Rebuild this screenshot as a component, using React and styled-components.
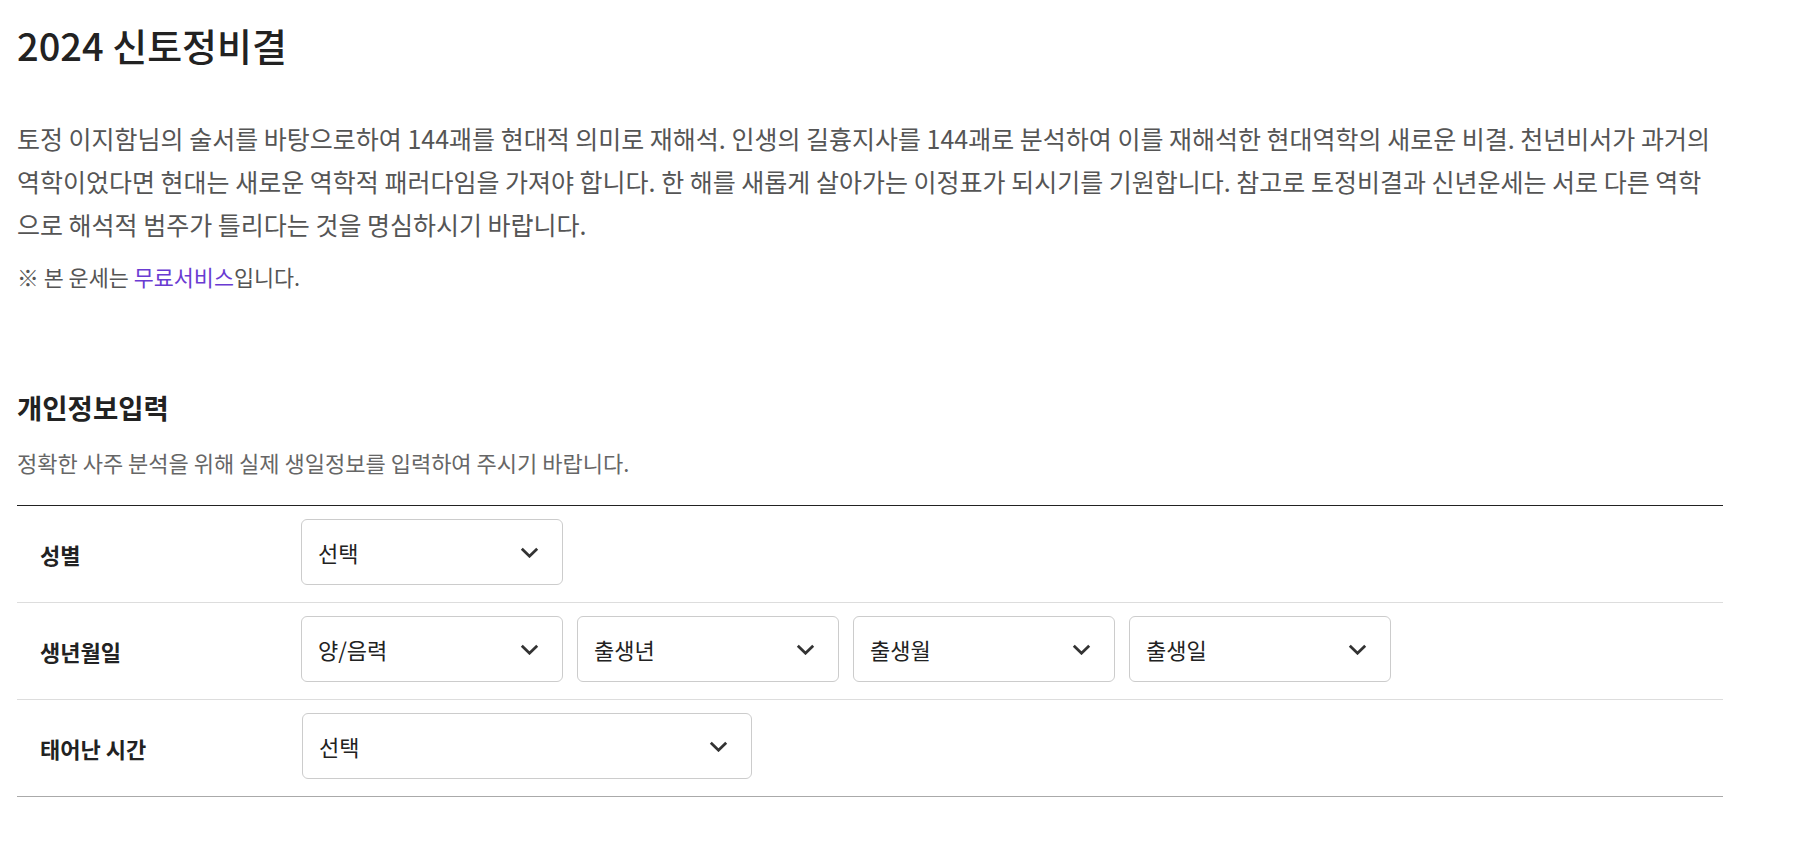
import React from "react";
import styled, { createGlobalStyle } from "styled-components";

const GlobalStyle = createGlobalStyle`
  html, body {
    margin: 0;
    padding: 0;
    background: #ffffff;
  }
  body {
    font-family: "Noto Sans CJK KR", "Noto Sans", sans-serif;
    color: #222222;
  }
  * { box-sizing: border-box; }
`;

const Page = styled.main`
  width: 1706px;
  margin: 0 0 0 17px;
  padding: 23px 0 40px;
`;

const Title = styled.h1`
  margin: 0;
  font-size: 38px;
  line-height: 44px;
  font-weight: 500;
  color: #222222;
`;

const Intro = styled.p`
  margin: 50px 0 0;
  font-size: 25px;
  line-height: 43px;
  color: #555555;
  white-space: nowrap;
`;

const Notice = styled.p`
  margin: 16px 0 0;
  font-size: 21.8px;
  line-height: 30px;
  color: #555555;
`;

const FreeLink = styled.span`
  color: #6a3bd2;
`;

const SectionTitle = styled.h2`
  margin: 97px 0 0;
  font-size: 27.5px;
  line-height: 36px;
  font-weight: 700;
  color: #222222;
`;

const SectionDesc = styled.p`
  margin: 22px 0 0;
  font-size: 22px;
  line-height: 30px;
  color: #666666;
`;

const Form = styled.div`
  margin-top: 28px;
  border-top: 1px solid #222222;
  border-bottom: 1px solid #aaaaaa;
`;

const Row = styled.div`
  display: flex;
  align-items: center;
  padding: 13px 0 17px;
  border-top: 1px solid #dddddd;
  &:first-child {
    border-top: none;
  }
`;

const Label = styled.div`
  width: 284px;
  flex-shrink: 0;
  padding: 3px 0 0 23px;
  font-size: 22px;
  font-weight: 700;
  color: #222222;
`;

const Fields = styled.div`
  display: flex;
  gap: 14px;
  padding-left: ${(p) => p.$offset || 0}px;
`;

const SelectBox = styled.div`
  width: ${(p) => p.$width}px;
  height: 66px;
  display: flex;
  align-items: center;
  justify-content: space-between;
  border: 1px solid #cccccc;
  border-radius: 6px;
  padding: 0 23px 0 16px;
  background: #ffffff;
  cursor: pointer;
`;

const SelectText = styled.span`
  font-size: 22px;
  padding-top: 0;
  color: #222222;
`;

const Chevron = () => (
  <svg width="19" height="11" viewBox="0 0 19 11" aria-hidden="true">
    <polyline
      points="1.8,1.8 9.5,9.2 17.2,1.8"
      fill="none"
      stroke="#333333"
      strokeWidth="2.8"
      strokeLinejoin="miter"
    />
  </svg>
);

const Select = ({ width, children }) => (
  <SelectBox $width={width}>
    <SelectText>{children}</SelectText>
    <Chevron />
  </SelectBox>
);

export default function App() {
  return (
    <>
      <GlobalStyle />
      <Page>
        <Title>2024 신토정비결</Title>
        <Intro>
          토정 이지함님의 술서를 바탕으로하여 144괘를 현대적 의미로 재해석. 인생의 길흉지사를 144괘로 분석하여 이를 재해석한 현대역학의 새로운 비결. 천년비서가 과거의
          <br />
          역학이었다면 현대는 새로운 역학적 패러다임을 가져야 합니다. 한 해를 새롭게 살아가는 이정표가 되시기를 기원합니다. 참고로 토정비결과 신년운세는 서로 다른 역학
          <br />
          으로 해석적 범주가 틀리다는 것을 명심하시기 바랍니다.
        </Intro>
        <Notice>
          ※ 본 운세는 <FreeLink>무료서비스</FreeLink>입니다.
        </Notice>

        <SectionTitle>개인정보입력</SectionTitle>
        <SectionDesc>정확한 사주 분석을 위해 실제 생일정보를 입력하여 주시기 바랍니다.</SectionDesc>

        <Form>
          <Row>
            <Label>성별</Label>
            <Fields>
              <Select width={262}>선택</Select>
            </Fields>
          </Row>
          <Row>
            <Label>생년월일</Label>
            <Fields>
              <Select width={262}>양/음력</Select>
              <Select width={262}>출생년</Select>
              <Select width={262}>출생월</Select>
              <Select width={262}>출생일</Select>
            </Fields>
          </Row>
          <Row>
            <Label>태어난 시간</Label>
            <Fields $offset={1}>
              <Select width={450}>선택</Select>
            </Fields>
          </Row>
        </Form>
      </Page>
    </>
  );
}
